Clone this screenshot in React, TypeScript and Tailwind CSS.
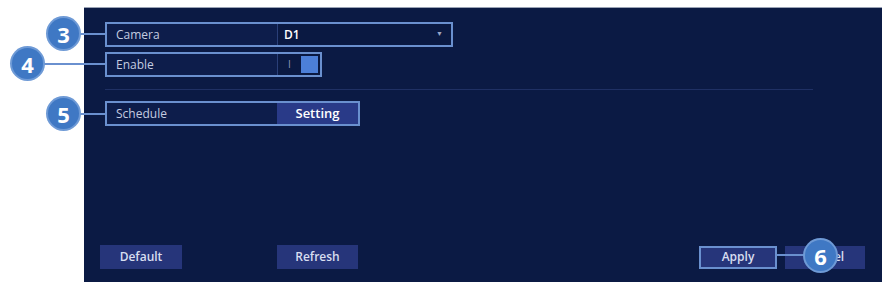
import React from "react";

const font = { fontFamily: '"Open Sans", "Noto Sans", Arial, sans-serif' };

function Badge({ n, className }: { n: string; className: string }) {
  return (
    <div
      className={`absolute flex h-[31px] w-[31px] items-center justify-center rounded-full bg-[#3f78c4] text-[22px] font-bold leading-none text-white shadow-[0_0_0_2px_#6e9ad6] ${className}`}
    >
      {n}
    </div>
  );
}

export default function App() {
  return (
    <div className="relative h-[284px] w-[884px] overflow-hidden bg-white" style={font}>
      <div className="flex h-full pt-[7px] pb-[2px] pl-[84px] pr-[2px]">
        <div className="flex flex-1 flex-col border-t border-[#9aa3b5] bg-[#0b1a44] pl-[21px] pr-[16px] pt-[14px]">
          {/* Camera */}
          <div className="flex h-[25px] w-[348px] border-2 border-[#6a90cf] bg-[#0d1d4b]">
            <div className="flex w-[170px] items-center pl-[9px] text-[12px] text-[#c4cce0]">Camera</div>
            <div className="flex flex-1 items-center justify-between border-l border-[#2a3f78] bg-[#0a1942] pl-[6px] pr-[8px] text-[12px] font-semibold text-white">
              <span>D1</span>
              <span className="text-[7px] text-[#9aa6c4]">▼</span>
            </div>
          </div>
          {/* Enable */}
          <div className="mt-[5px] flex h-[25px] w-[217px] border-2 border-[#6a90cf] bg-[#0d1d4b]">
            <div className="flex w-[170px] items-center pl-[9px] text-[12px] text-[#c4cce0]">Enable</div>
            <div className="flex flex-1 items-center border-l border-[#2a3f78] bg-[#0a1942] py-[2px] pr-[2px]">
              <div className="flex w-[23px] items-center justify-center text-[10px] text-[#8d99b8]">I</div>
              <div className="h-full flex-1 bg-[#4c7fd8]" />
            </div>
          </div>
          {/* Separator */}
          <div className="mt-[12px] h-px w-[708px] bg-[#1f3064]" />
          {/* Schedule */}
          <div className="mt-[11px] flex h-[25px] w-[255px] border-2 border-[#6a90cf] bg-[#0d1d4b]">
            <div className="flex w-[170px] items-center pl-[9px] text-[12px] text-[#c4cce0]">Schedule</div>
            <div className="flex flex-1 items-center justify-center bg-[#293a88] text-[13px] font-semibold text-white">
              Setting
            </div>
          </div>
          <div className="flex-1" />
          {/* Bottom buttons */}
          <div className="mb-[13px] flex items-center">
            <div className="ml-[-5px] flex h-[24px] w-[82px] items-center justify-center bg-[#26357a] text-[12px] font-semibold text-[#d8def0]">
              Default
            </div>
            <div className="ml-[95px] flex h-[24px] w-[81px] items-center justify-center bg-[#26357a] text-[12px] font-semibold text-[#d8def0]">
              Refresh
            </div>
            <div className="flex-1" />
            <div className="flex h-[23px] w-[78px] items-center justify-center border-2 border-[#6a90cf] bg-[#26357a] text-[12px] font-semibold text-[#d8def0]">
              Apply
            </div>
            <div className="ml-[8px] mr-[1px] flex h-[23px] w-[80px] items-center justify-center bg-[#26357a] text-[12px] font-semibold text-[#d8def0]">
              Cancel
            </div>
          </div>
        </div>
      </div>

      {/* Annotation connectors */}
      <div className="absolute left-[78px] top-[33px] h-[2px] w-[28px] bg-[#6a90cf]" />
      <div className="absolute left-[42px] top-[63px] h-[2px] w-[64px] bg-[#6a90cf]" />
      <div className="absolute left-[78px] top-[113px] h-[2px] w-[28px] bg-[#6a90cf]" />
      <div className="absolute left-[775px] top-[254px] h-[2px] w-[32px] bg-[#6a90cf]" />

      <Badge n="3" className="left-[48px] top-[18px]" />
      <Badge n="4" className="left-[12px] top-[48px]" />
      <Badge n="5" className="left-[48px] top-[98px]" />
      <Badge n="6" className="left-[805px] top-[240px]" />
    </div>
  );
}
